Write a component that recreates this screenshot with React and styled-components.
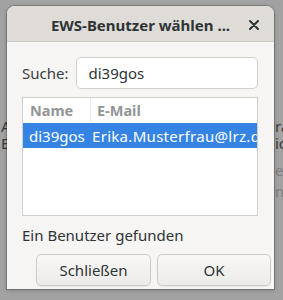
import styled, { createGlobalStyle } from 'styled-components'

const GlobalStyle = createGlobalStyle`
  html, body {
    margin: 0;
    padding: 0;
    background: #a2a2a2;
  }
  body {
    font-family: "Noto Sans", "DejaVu Sans", sans-serif;
  }
`

const Screen = styled.div`
  position: relative;
  width: 283px;
  height: 300px;
  overflow: hidden;
  background: #a2a2a2;
`

const Parent = styled.div`
  display: flex;
  justify-content: space-between;
  padding: 116px 0 0 1px;
  font-size: 15px;
  line-height: 17px;
  color: #3c3c3c;
`

const ParentColumn = styled.div`
  display: flex;
  flex-direction: column;
  width: ${props => props.width}px;
  overflow: hidden;
  white-space: nowrap;
`

const ParentLine = styled.span`
  color: ${props => (props.faint ? '#7c7c7c' : '#3c3c3c')};
  margin-top: ${props => props.gap || 0}px;
`

const Dialog = styled.div`
  position: absolute;
  left: 7px;
  top: 6px;
  width: 267px;
  height: 283px;
  display: flex;
  flex-direction: column;
  background: #f6f5f4;
  border-radius: 8px 8px 0 0;
  box-shadow: 0 0 0 1px rgba(0, 0, 0, 0.18), 0 1px 4px rgba(0, 0, 0, 0.25);
  overflow: hidden;
`

const TitleBar = styled.div`
  position: relative;
  height: 36px;
  flex: none;
  display: flex;
  align-items: center;
  justify-content: center;
  background: #dfdcd8;
  border-bottom: 1px solid #cfcac5;
  box-sizing: border-box;
`

const Title = styled.span`
  font-size: 15px;
  font-weight: 700;
  color: #2e3436;
  padding-top: 3px;
`

const Close = styled.span`
  position: absolute;
  right: 13px;
  top: 9px;
  width: 14px;
  height: 20px;
  display: flex;
  align-items: center;
  justify-content: center;
`

const Body = styled.div`
  flex: 1;
  display: flex;
  flex-direction: column;
  padding: 15px 16px 0 15px;
`

const SearchRow = styled.div`
  display: flex;
  align-items: center;
  gap: 8px;
`

const Label = styled.span`
  font-size: 15px;
  color: #3a3d3e;
`

const Input = styled.div`
  flex: 1;
  height: 32px;
  box-sizing: border-box;
  background: #fff;
  border: 1px solid #d3cfca;
  border-radius: 5px;
  display: flex;
  align-items: center;
  padding-left: 11px;
  font-size: 15px;
  color: #2e3436;
`

const List = styled.div`
  margin-top: 8px;
  height: 119px;
  box-sizing: border-box;
  background: #fff;
  border: 1px solid #d3cfca;
  overflow: hidden;
`

const HeaderRow = styled.div`
  display: flex;
  height: 24px;
  align-items: center;
  margin-bottom: 1px;
`

const HeaderCell = styled.div`
  width: ${props => props.width}px;
  height: 100%;
  box-sizing: border-box;
  display: flex;
  align-items: center;
  padding-left: ${props => props.pad}px;
  font-size: 14.5px;
  font-weight: 700;
  color: #929595;
  border-right: ${props => (props.divider ? '1px solid #ebebeb' : 'none')};
`

const Row = styled.div`
  display: flex;
  height: 25px;
  align-items: center;
  background: ${props => (props.selected ? '#3584e4' : 'transparent')};
  color: ${props => (props.selected ? '#fff' : '#2e3436')};
  font-size: 15px;
  white-space: nowrap;
`

const Cell = styled.div`
  width: ${props => props.width}px;
  flex: none;
  padding-left: ${props => props.pad}px;
  box-sizing: border-box;
  overflow: hidden;
  letter-spacing: ${props => props.spacing || 0}px;
`

const Status = styled.div`
  margin-top: 9px;
  font-size: 15px;
  color: #2e3436;
`

const Buttons = styled.div`
  margin-top: auto;
  margin-bottom: 3px;
  display: flex;
  justify-content: flex-end;
  gap: 6px;
  margin-right: -13px;
`

const Button = styled.button`
  width: ${props => props.width}px;
  height: 32px;
  font-family: inherit;
  font-size: 15px;
  color: #2e3436;
  background: linear-gradient(#f8f7f6, #edebe9);
  border: 1px solid #cfcac5;
  border-radius: 5px;
  box-shadow: 0 1px 1px rgba(0, 0, 0, 0.06);
  padding: 0;
`

const App = () => (
  <Screen>
    <GlobalStyle />
    <Parent>
      <ParentColumn width={6}>
        <ParentLine gap={2}>A</ParentLine>
        <ParentLine>E</ParentLine>
      </ParentColumn>
      <ParentColumn width={8}>
        <ParentLine gap={2}>ra</ParentLine>
        <ParentLine>ic</ParentLine>
        <ParentLine faint gap={10}>en</ParentLine>
        <ParentLine faint gap={4}>n</ParentLine>
      </ParentColumn>
    </Parent>
    <Dialog>
      <TitleBar>
        <Title>EWS-Benutzer wählen ...</Title>
        <Close>
          <svg width='10' height='10' viewBox='0 0 10 10'>
            <path d='M1 1 L9 9 M9 1 L1 9' stroke='#2e3436' strokeWidth='2' strokeLinecap='round' />
          </svg>
        </Close>
      </TitleBar>
      <Body>
        <SearchRow>
          <Label>Suche:</Label>
          <Input>di39gos</Input>
        </SearchRow>
        <List>
          <HeaderRow>
            <HeaderCell width={68} pad={7} divider>Name</HeaderCell>
            <HeaderCell width={160} pad={6}>E-Mail</HeaderCell>
          </HeaderRow>
          <Row selected>
            <Cell width={69} pad={6}>di39gos</Cell>
            <Cell width={166} pad={0} spacing={0.3}>Erika.Musterfrau@lrz.de</Cell>
          </Row>
        </List>
        <Status>Ein Benutzer gefunden</Status>
        <Buttons>
          <Button width={115}>Schließen</Button>
          <Button width={114}>OK</Button>
        </Buttons>
      </Body>
    </Dialog>
  </Screen>
)

export default App
